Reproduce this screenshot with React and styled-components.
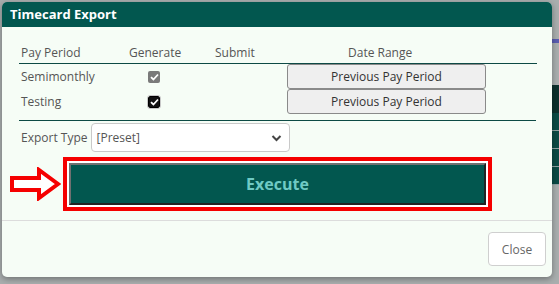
import React from 'react';
import styled, { createGlobalStyle } from 'styled-components';

const GlobalStyle = createGlobalStyle`
  html, body {
    margin: 0;
    padding: 0;
    background: #a9aeae;
    font-family: 'Open Sans', 'Liberation Sans', sans-serif;
  }
`

const Page = styled.div`
  width: 559px;
  height: 284px;
  position: relative;
  overflow: hidden;
  background: #a9aeae;
`

const Backdrop = styled.div`
  position: absolute;
  right: 0;
  top: 0;
  width: 12px;
  height: 284px;
  display: flex;
  flex-direction: column;
`

const Strip = styled.div`
  height: ${p => p.h}px;
  background: ${p => p.bg};
  border-bottom: ${p => p.line ? '1px solid #8fa3a3' : 'none'};
`

const Modal = styled.div`
  position: absolute;
  left: 2px;
  top: 2px;
  width: 550px;
  height: 275px;
  background: #f6fdf6;
  border-radius: 5px;
  box-shadow: 0 2px 6px rgba(0,0,0,0.35);
  display: flex;
  flex-direction: column;
  overflow: hidden;
`

const Header = styled.div`
  height: 25px;
  background: #02574f;
  color: #fff;
  font-weight: 700;
  font-size: 13px;
  line-height: 25px;
  padding-left: 8px;
  flex-shrink: 0;
`

const Body = styled.div`
  padding: 16px 15px 0 17px;
  flex: 1;
`

const Grid = styled.div`
  display: grid;
  grid-template-columns: 98px 85px 70px 1fr;
  font-size: 12px;
  color: #555;
`

const HeadCell = styled.div`
  height: 20px;
  line-height: 20px;
  text-align: left;
  padding-left: ${p => p.pad || 0}px;
  border-bottom: 1px solid #0d4a45;
`

const Cell = styled.div`
  height: 25px;
  display: flex;
  align-items: center;
  padding-left: ${p => p.pad || 0}px;
`

const Check = styled.span`
  width: 12px;
  height: 12px;
  box-sizing: border-box;
  border-radius: 2px;
  display: inline-flex;
  align-items: center;
  justify-content: center;
  background: ${p => p.dark ? '#111' : '#7a7a7a'};
  border: ${p => p.dark ? '1px solid #000' : 'none'};
  outline: ${p => p.dark ? '1px solid #c8c8c8' : 'none'};
  margin-left: -1px;
`

const PeriodButton = styled.button`
  width: 199px;
  height: 25px;
  margin-left: 15px;
  background: #efefef;
  border: 1px solid #8a8a8a;
  border-radius: 3px;
  font-family: inherit;
  font-size: 12px;
  color: #333;
  padding: 0;
`

const Divider = styled.div`
  height: 1px;
  background: #0d4a45;
  margin-top: 6px;
  width: 517px;
`

const ExportRow = styled.div`
  display: flex;
  align-items: center;
  gap: 3px;
  margin-top: 2px;
  font-size: 12px;
  color: #555;
`

const Label = styled.span`
  padding-left: 2px;
`

const Select = styled.div`
  width: 199px;
  height: 29px;
  box-sizing: border-box;
  border: 1px solid #c9c9c9;
  border-radius: 4px;
  background: #fff;
  display: flex;
  align-items: center;
  justify-content: space-between;
  padding: 0 7px 0 5px;
  color: #555;
`

const ActionRow = styled.div`
  display: flex;
  align-items: center;
  margin-top: 5px;
  margin-left: -10px;
`

const Highlight = styled.div`
  border: 4px solid #f50000;
  padding: 2px;
  background: #fff;
  margin-left: 2px;
`

const ExecuteButton = styled.button`
  width: 417px;
  height: 42px;
  box-sizing: border-box;
  background: #02574f;
  border: 2px solid;
  border-color: #707070 #222 #222 #707070;
  color: #6fcac4;
  font-family: inherit;
  font-weight: 700;
  font-size: 16px;
  display: block;
`

const Footer = styled.div`
  border-top: 1px solid #dcdcdc;
  height: 56px;
  display: flex;
  justify-content: flex-end;
  align-items: center;
  padding-right: 6px;
  flex-shrink: 0;
`

const CloseButton = styled.button`
  width: 58px;
  height: 34px;
  background: #fff;
  border: 1px solid #cfcfcf;
  border-radius: 4px;
  font-family: inherit;
  font-size: 12px;
  color: #666;
`

const Arrow = () => (
  <svg width="52" height="34" viewBox="0 0 52 34">
    <path d="M3 11 H30 V3 L49 17 L30 31 V23 H3 Z" fill="#fff" stroke="#f50000" strokeWidth="4" strokeLinejoin="miter" />
  </svg>
)

const Tick = ({ color }) => (
  <svg width="9" height="8" viewBox="0 0 9 8">
    <path d="M1 4.2 L3.4 6.5 L8 1.5" fill="none" stroke={color} strokeWidth="1.8" />
  </svg>
)

const Chevron = () => (
  <svg width="11" height="8" viewBox="0 0 11 8">
    <path d="M1.5 2 L5.5 6 L9.5 2" fill="none" stroke="#444" strokeWidth="2" />
  </svg>
)

const rows = [
  { name: 'Semimonthly', dark: false },
  { name: 'Testing', dark: true },
]

export default function App() {
  return (
    <Page>
      <GlobalStyle />
      <Backdrop>
        <Strip h={39} bg="#a9aeae" />
        <Strip h={4} bg="#5a5db0" />
        <Strip h={42} bg="#a9aeae" />
        <Strip h={28} bg="#0d302d" />
        <Strip h={17} bg="#0b4a45" line />
        <Strip h={17} bg="#0b4a45" line />
        <Strip h={17} bg="#0b4a45" line />
        <Strip h={17} bg="#0b4a45" line />
      </Backdrop>
      <Modal>
        <Header>Timecard Export</Header>
        <Body>
          <Grid>
            <HeadCell pad={2}>Pay Period</HeadCell>
            <HeadCell pad={12}>Generate</HeadCell>
            <HeadCell pad={13}>Submit</HeadCell>
            <HeadCell pad={76}>Date Range</HeadCell>
            {rows.map(r => (
              <React.Fragment key={r.name}>
                <Cell pad={2}>{r.name}</Cell>
                <Cell pad={32}>
                  <Check dark={r.dark}><Tick color="#fff" /></Check>
                </Cell>
                <Cell />
                <Cell><PeriodButton>Previous Pay Period</PeriodButton></Cell>
              </React.Fragment>
            ))}
          </Grid>
          <Divider />
          <ExportRow>
            <Label>Export Type</Label>
            <Select>
              <span>[Preset]</span>
              <Chevron />
            </Select>
          </ExportRow>
          <ActionRow>
            <Arrow />
            <Highlight>
              <ExecuteButton>Execute</ExecuteButton>
            </Highlight>
          </ActionRow>
        </Body>
        <Footer>
          <CloseButton>Close</CloseButton>
        </Footer>
      </Modal>
    </Page>
  )
}
